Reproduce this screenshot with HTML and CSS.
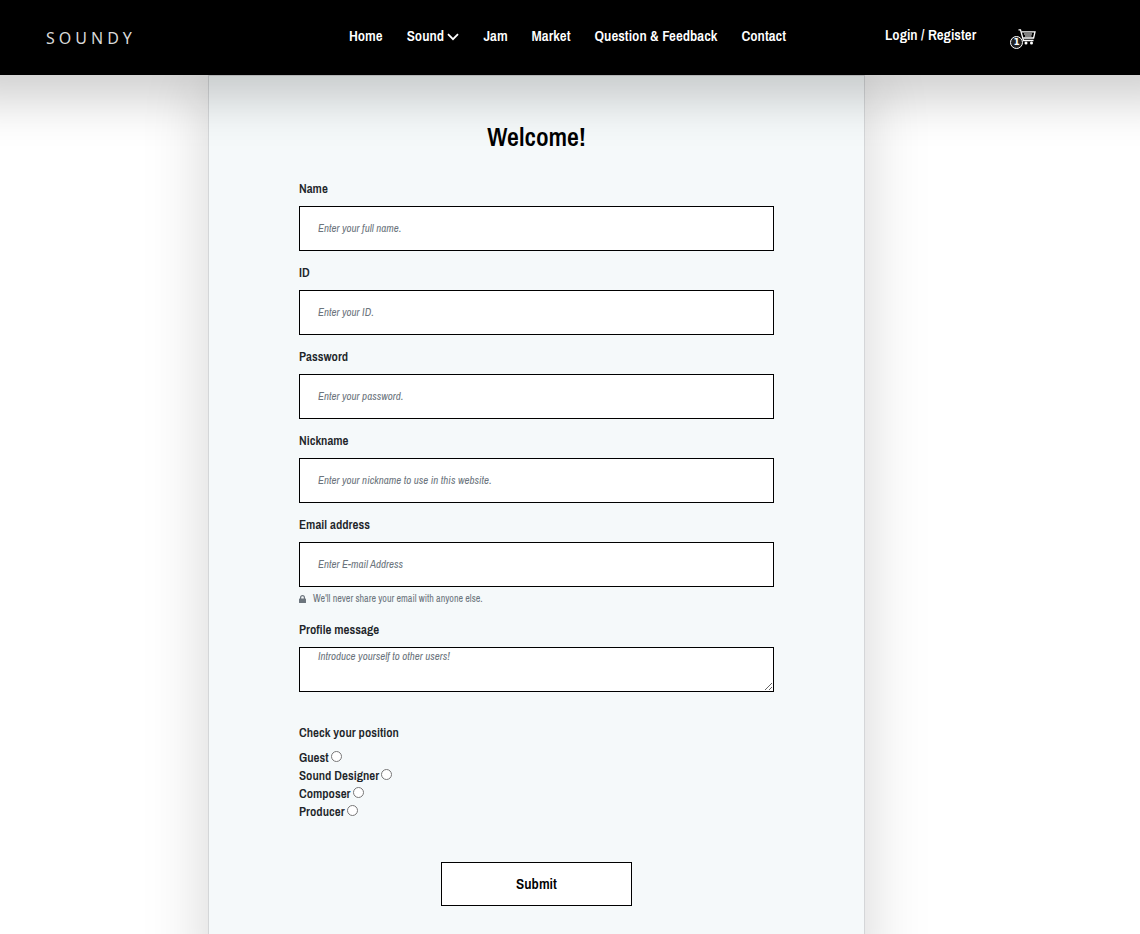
FILE: index.html
```
<!DOCTYPE html>
<html lang="en">
<head>
    <meta charset="UTF-8">
    <meta name="viewport" content="width=device-width, initial-scale=1">
    <title>SOUNDY</title>
    <link rel="stylesheet" href="styles.css">
</head>
<body>
    <header class="header">
        <a href="#" class="logo">SOUNDY</a>
        <nav class="menu">
            <a href="#">Home</a>
            <a href="#">Sound
                <svg class="arrow" width="12" height="8" viewBox="0 0 12 8" aria-hidden="true">
                    <path d="M1 1.2 L6 6.2 L11 1.2" fill="none" stroke="currentColor" stroke-width="1.8"/>
                </svg>
            </a>
            <a href="#">Jam</a>
            <a href="#">Market</a>
            <a href="#">Question &amp; Feedback</a>
            <a href="#">Contact</a>
        </nav>
        <div class="user">
            <a href="#" class="login">Login / Register</a>
            <a href="#" class="cart" aria-label="Cart">
                <svg width="18" height="17" viewBox="0 0 18 17" fill="none" stroke="currentColor" aria-hidden="true">
                    <path d="M0.5 0.8 H2.5 L5.5 11.5 H15.5" stroke-width="1.3"/>
                    <path d="M3.4 2.8 H17 L15.6 9 H5.3" stroke-width="1.3"/>
                    <path d="M6 5 H14 M7 7 H13.5" stroke-width="1"/>
                    <circle cx="8" cy="14" r="1.5" fill="currentColor" stroke="none"/>
                    <circle cx="13.5" cy="14" r="1.5" fill="currentColor" stroke="none"/>
                </svg>
                <span class="count">1</span>
            </a>
        </div>
    </header>

    <main class="page">
        <form class="card">
            <h1>Welcome!</h1>
            <div class="group">
                <label for="name">Name</label>
                <input type="text" id="name" placeholder="Enter your full name.">
            </div>
            <div class="group">
                <label for="userid">ID</label>
                <input type="text" id="userid" placeholder="Enter your ID.">
            </div>
            <div class="group">
                <label for="password">Password</label>
                <input type="password" id="password" placeholder="Enter your password.">
            </div>
            <div class="group">
                <label for="nickname">Nickname</label>
                <input type="text" id="nickname" placeholder="Enter your nickname to use in this website.">
            </div>
            <div class="group">
                <label for="email">Email address</label>
                <input type="email" id="email" placeholder="Enter E-mail Address">
                <small class="help">
                    <svg width="7" height="8" viewBox="0 0 7 8" aria-hidden="true">
                        <path d="M1.6 4 V2.5 A1.9 1.9 0 0 1 5.4 2.5 V4" fill="none" stroke="currentColor" stroke-width="1.2"/>
                        <rect y="3.6" width="7" height="4.4" rx="0.6" fill="currentColor"/>
                    </svg>
                    We'll never share your email with anyone else.
                </small>
            </div>
            <div class="group">
                <label for="message">Profile message</label>
                <textarea id="message" placeholder="Introduce yourself to other users!"></textarea>
            </div>
            <fieldset class="position">
                <legend>Check your position</legend>
                <div class="choice"><label for="guest">Guest</label><input type="radio" name="position" id="guest"></div>
                <div class="choice"><label for="designer">Sound Designer</label><input type="radio" name="position" id="designer"></div>
                <div class="choice"><label for="composer">Composer</label><input type="radio" name="position" id="composer"></div>
                <div class="choice"><label for="producer">Producer</label><input type="radio" name="position" id="producer"></div>
            </fieldset>
            <button type="submit" class="submit">Submit</button>
        </form>
    </main>
</body>
</html>
```
FILE: styles.css
```
* {
    box-sizing: border-box;
}
body {
    margin: 0;
    background: #fff;
    color: #212529;
    font-family: "Archivo Narrow", "Roboto Condensed", Roboto, sans-serif;
    font-size: 13px;
    line-height: 20px;
}
a {
    color: #fff;
    text-decoration: none;
}
input,
textarea,
button {
    font-family: inherit;
}

/* header */
.header {
    position: relative;
    z-index: 1;
    display: grid;
    grid-template-columns: 1fr auto 1fr;
    align-items: center;
    height: 75px;
    padding: 0 51px 0 46px;
    background: #000;
    box-shadow: 0 -20px 44px 45px rgba(0, 0, 0, .19);
}
.logo {
    color: #d8d8d8;
    font-family: "Noto Sans", sans-serif;
    font-size: 16px;
    letter-spacing: 4px;
}
.menu {
    display: flex;
    gap: 24px;
    padding-bottom: 4px;
    font-size: 15px;
    font-weight: 600;
    white-space: nowrap;
}
.user {
    display: flex;
    align-items: center;
    gap: 34px;
    padding-left: 99px;
    font-size: 15px;
    font-weight: 600;
    white-space: nowrap;
}
.login {
    padding-bottom: 6px;
}
.cart {
    position: relative;
    display: flex;
    padding-left: 8px;
}
.count {
    position: absolute;
    left: 0;
    top: 7px;
    width: 13px;
    height: 13px;
    border: 1px solid #fff;
    border-radius: 50%;
    background: #222;
    font: bold 9px/11px "DejaVu Sans", sans-serif;
    text-align: center;
}

/* join form */
.page {
    padding-right: 67px;
}
.card {
    display: flex;
    flex-direction: column;
    max-width: 657px;
    margin: 0 auto;
    padding: 41px 90px 90px;
    border: 1px solid #d4d6d8;
    background: #f5f9fa;
    box-shadow: 0 0 60px rgba(0, 0, 0, .17);
}
h1 {
    margin: 0 0 22px;
    color: #000;
    font-size: 26px;
    font-weight: 600;
    line-height: 40px;
    text-align: center;
}
.group {
    display: flex;
    flex-direction: column;
    margin-bottom: 12px;
}
.group label,
legend {
    font-weight: 600;
}
.group label {
    margin-bottom: 7px;
}
.group input,
textarea {
    width: 100%;
    height: 45px;
    margin: 0;
    padding: 0 18px 2px;
    border: 1px solid #000;
    border-radius: 0;
    background: #fff;
    font-size: 11px;
    line-height: 16px;
}
::placeholder {
    color: #6c757d;
    font-style: italic;
}
.help {
    display: flex;
    align-items: center;
    gap: 7px;
    margin-top: 3px;
    color: #6c757d;
    font-size: 10px;
    line-height: 18px;
}
.position {
    margin: 19px 0 41px;
    padding: 0;
    border: 0;
}
legend {
    margin-bottom: 6px;
    padding: 0;
}
.choice {
    display: flex;
    align-items: center;
    gap: 2px;
    font-weight: 600;
    line-height: 18px;
}
.choice input {
    width: 11px;
    height: 11px;
    margin: 0 0 3px;
}
.submit {
    align-self: center;
    width: 191px;
    height: 44px;
    padding: 0 0 2px;
    border: 1px solid #000;
    background: #fff;
    color: #000;
    font-size: 15px;
    font-weight: 600;
}
```
